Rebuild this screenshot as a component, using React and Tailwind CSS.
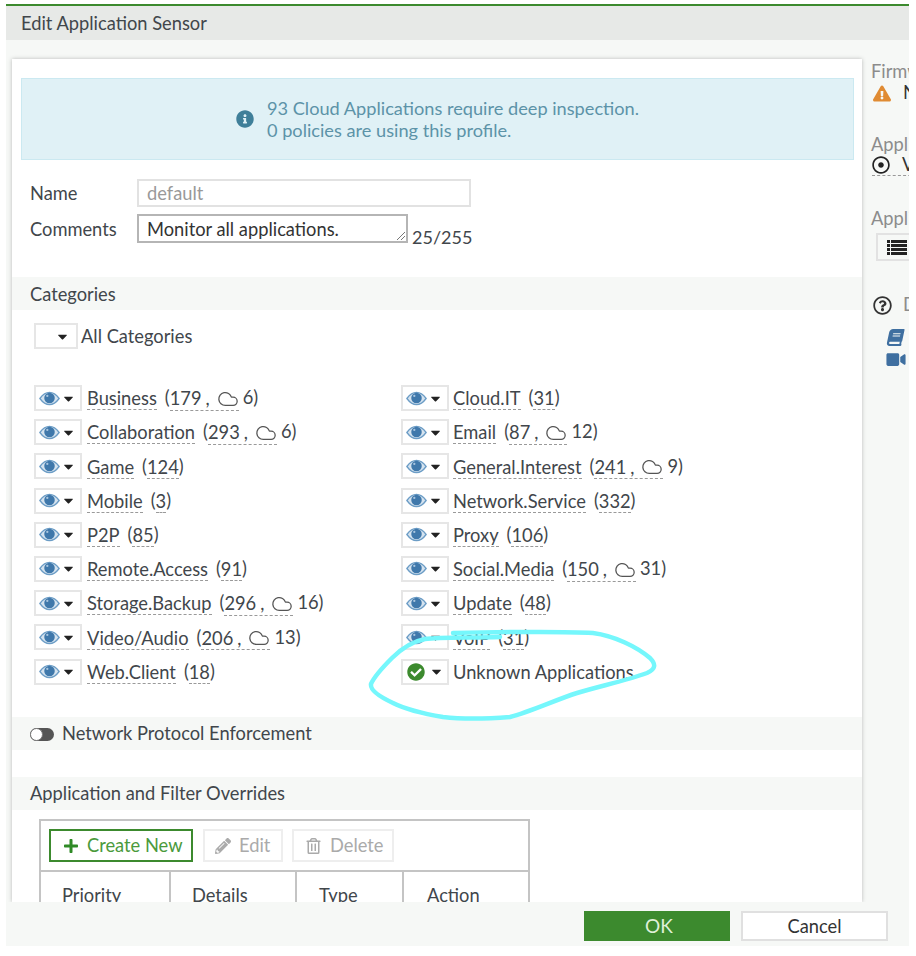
import { Cloud } from 'lucide-react';
import {
  FaBook,
  FaCaretDown,
  FaCheckCircle,
  FaExclamationTriangle,
  FaInfoCircle,
  FaPencilAlt,
  FaPlus,
  FaRegDotCircle,
  FaRegQuestionCircle,
  FaRegTrashAlt,
  FaVideo,
} from 'react-icons/fa';

const leftCategories = [
  { name: 'Business', count: 179, cloud: 6 },
  { name: 'Collaboration', count: 293, cloud: 6 },
  { name: 'Game', count: 124 },
  { name: 'Mobile', count: 3 },
  { name: 'P2P', count: 85 },
  { name: 'Remote.Access', count: 91 },
  { name: 'Storage.Backup', count: 296, cloud: 16 },
  { name: 'Video/Audio', count: 206, cloud: 13 },
  { name: 'Web.Client', count: 18 },
];

const rightCategories = [
  { name: 'Cloud.IT', count: 31 },
  { name: 'Email', count: 87, cloud: 12 },
  { name: 'General.Interest', count: 241, cloud: 9 },
  { name: 'Network.Service', count: 332 },
  { name: 'Proxy', count: 106 },
  { name: 'Social.Media', count: 150, cloud: 31 },
  { name: 'Update', count: 48 },
  { name: 'VoIP', count: 31 },
  { name: 'Unknown Applications', unknown: true },
];

const EyeIcon = () => (
  <svg className="shrink-0" width="21" height="15" viewBox="0 0 24 16">
    <path d="M1 8C5 2.5 9 1 12 1s7 1.500 11 7c-4 5.500-8 7-11 7S5 13.500 1 8z" fill="#d5e3ef" stroke="#6c9dc6" strokeWidth="1.500" />
    <circle cx="12" cy="7.500" r="6" fill="#3f78ab" />
    <circle cx="9.500" cy="5" r="1.300" fill="#a9c6df" />
  </svg>
);

const ListIcon = () => (
  <svg className="shrink-0" width="20" height="17" viewBox="0 0 20 17" fill="#222">
    <rect x="0" y="1" width="3" height="3" />
    <rect x="4" y="1" width="16" height="3" />
    <rect x="0" y="5" width="3" height="3" />
    <rect x="4" y="5" width="16" height="3" />
    <rect x="0" y="9" width="3" height="3" />
    <rect x="4" y="9" width="16" height="3" />
    <rect x="0" y="13" width="3" height="3" />
    <rect x="4" y="13" width="16" height="3" />
  </svg>
);

const CategoryRow = ({ category, right }) => {
  const { name, count, cloud, unknown } = category;

  return (
    <div className="flex items-center h-[26px] mb-[8.2px]">
      <div className="flex items-center w-[48px] h-[26px] border-2 border-[#e6e6e6] bg-white pl-[3px] shrink-0">
        {unknown ? (
          <FaCheckCircle className="w-[18px] h-[18px] ml-[1px] mr-[3px] text-[#3c8a2e]" />
        ) : (
          <EyeIcon />
        )}
        <FaCaretDown className="w-[15px] h-[15px] ml-[1px] text-[#222]" />
      </div>
      {unknown ? (
        <span className={`${right ? 'ml-[4px]' : 'ml-[5px]'} mt-[2px]`}>{name}</span>
      ) : (
        <>
          <span className={`${right ? 'ml-[4px]' : 'ml-[5px]'} border-b border-dashed border-[#9a9a9a] leading-[21px] mt-[2.5px]`}>{name}</span>
          <span className="ml-[8px]">(</span>
          <span className="flex items-center border-b border-dashed border-[#9a9a9a] leading-[21px] mt-[2.5px]">
            {count}
            {cloud !== undefined && (
              <>
                <span className="ml-[4px]">,</span>
                <Cloud className="w-[22px] h-[22px] ml-[7px] text-[#555]" strokeWidth={1.4} />
              </>
            )}
          </span>
          {cloud !== undefined && <span className="ml-[4px]">{cloud}</span>}
          <span>)</span>
        </>
      )}
    </div>
  );
};

const SectionBand = ({ children, className = '' }) => (
  <div className={`flex items-center h-[33px] bg-[#f6f8f6] pl-[18px] pt-[2px] ${className}`}>{children}</div>
);

const App = () => {
  return (
    <div
      className="relative w-[916px] h-[956px] bg-white overflow-hidden text-[18.3px] text-[#41464b]"
      style={{ fontFamily: 'Lato, "Open Sans", sans-serif' }}
    >
      <div className="flex flex-col w-[903px] h-[942px] mt-[4px] ml-[6px] bg-[#f6f8f6]">
        {/* Title bar */}
        <div className="flex items-center h-[36px] shrink-0 pl-[15px] pt-[2px] bg-[#e7e9e7] border-t-2 border-[#3c8a2e]">
          Edit Application Sensor
        </div>

        <div className="flex flex-1 min-h-0 pt-[19px]">
          {/* Main panel */}
          <div className="w-[850px] ml-[6px] shrink-0 bg-white shadow-[0_0_4px_rgba(0,0,0,0.25)] overflow-hidden">
            <div className="flex items-center justify-center h-[82px] mt-[19px] ml-[9px] mr-[8px] bg-[#e0f1f6] border border-[#cbe9f1] text-[18.2px] text-[#5c93a8] leading-[22px]">
              <FaInfoCircle className="w-[18px] h-[18px] mr-[13px] text-[#3f7f99]" />
              <div>
                <div>93 Cloud Applications require deep inspection.</div>
                <div>0 policies are using this profile.</div>
              </div>
            </div>

            <div className="flex items-center mt-[19px] ml-[18px] h-[28px]">
              <span className="w-[107px] pt-[2px]">Name</span>
              <div className="flex items-center w-[334px] h-[28px] border-2 border-[#e2e2e2] pl-[8px] pt-[2px] text-[#999]">default</div>
            </div>
            <div className="flex items-center mt-[7px] ml-[18px] h-[29px]">
              <span className="w-[107px] pt-[2px]">Comments</span>
              <div className="relative flex items-center w-[271px] h-[29px] border-2 border-[#b5b5b5] pl-[8px] pt-[2px] text-[#333]">
                Monitor all applications.
                <svg className="absolute right-0 bottom-0" width="10" height="10" viewBox="0 0 10 10">
                  <path d="M1 9 9 1M5 9 9 5" stroke="#777" strokeWidth="1" />
                </svg>
              </div>
              <span className="ml-[4px] mt-[18px] text-[18px]">25/255</span>
            </div>

            <SectionBand className="mt-[34px]">Categories</SectionBand>

            <div className="flex items-center mt-[13px] ml-[22px] h-[26px]">
              <div className="flex items-center justify-end w-[44px] h-[26px] border-2 border-[#e6e6e6] pr-[6px]">
                <FaCaretDown className="w-[15px] h-[15px] text-[#222]" />
              </div>
              <span className="ml-[3px] pt-[2px]">All Categories</span>
            </div>

            <div className="grid grid-cols-[367px_1fr] mt-[36px] ml-[22px]">
              <div>
                {leftCategories.map((category) => (
                  <CategoryRow key={category.name} category={category} />
                ))}
              </div>
              <div>
                {rightCategories.map((category) => (
                  <CategoryRow key={category.name} category={category} right />
                ))}
              </div>
            </div>

            <SectionBand className="mt-[24px]">
              <div className="relative w-[24px] h-[13px] rounded-full bg-[#555] mr-[8px]">
                <div className="absolute left-0 top-0 w-[13px] h-[13px] rounded-full bg-white border border-[#777]" />
              </div>
              Network Protocol Enforcement
            </SectionBand>

            <SectionBand className="mt-[27px]">Application and Filter Overrides</SectionBand>

            <div className="mt-[9px] ml-[27px] w-[491px] border-2 border-b-0 border-[#c4c4c4]">
              <div className="flex items-center h-[51px] pl-[8px] border-b-2 border-[#c4c4c4]">
                <div className="flex items-center w-[144px] h-[33px] border-2 border-[#3c8a2e] text-[#4a9a3c] pl-[12px] pt-[2px]">
                  <FaPlus className="w-[16px] h-[16px] mr-[8px] text-[#2f8a26]" />
                  Create New
                </div>
                <div className="flex items-center w-[80px] h-[33px] ml-[10px] border-2 border-[#eeeeee] text-[#aaa] pl-[10px] pt-[2px]">
                  <FaPencilAlt className="w-[16px] h-[16px] mr-[8px]" />
                  Edit
                </div>
                <div className="flex items-center w-[102px] h-[33px] ml-[9px] border-2 border-[#eeeeee] text-[#aaa] pl-[12px] pt-[2px]">
                  <FaRegTrashAlt className="w-[15px] h-[16px] mr-[9px]" />
                  Delete
                </div>
              </div>
              <div className="grid grid-cols-[130px_126px_107px_1fr] h-[60px]">
                <div className="pl-[21px] pt-[10px] border-r-2 border-[#c4c4c4]">Priority</div>
                <div className="pl-[21px] pt-[10px] border-r-2 border-[#c4c4c4]">Details</div>
                <div className="pl-[22px] pt-[10px] border-r-2 border-[#c4c4c4]">Type</div>
                <div className="pl-[23px] pt-[10px]">Action</div>
              </div>
            </div>
          </div>

          {/* Right sidebar, cut off by the window */}
          <div className="flex-1 min-w-0 overflow-hidden whitespace-nowrap pl-[10px] text-[#333]">
            <div className="mt-[1px] -ml-[1px] text-[#8c8c8c] leading-[22px]">Firmware</div>
            <div className="flex items-center h-[22px] ml-[1px]">
              <FaExclamationTriangle className="w-[18px] h-[17px] text-[#e08b33] shrink-0" />
              <span className="ml-[12px]">No</span>
            </div>
            <div className="mt-[29px] -ml-[1px] text-[#8c8c8c] leading-[22px]">Application</div>
            <div className="flex items-center h-[21px] border-b border-dashed border-[#999] w-[60px]">
              <FaRegDotCircle className="w-[18px] h-[18px] text-[#222] shrink-0" />
              <span className="ml-[12px]">View</span>
            </div>
            <div className="mt-[31px] -ml-[1px] text-[#8c8c8c] leading-[22px]">Application</div>
            <div className="flex items-center w-[60px] h-[28px] ml-[4px] mt-[4px] border-2 border-[#e2e2e2] pl-[9px]">
              <ListIcon />
            </div>
            <div className="flex items-center mt-[33px] h-[22px] ml-[1px]">
              <FaRegQuestionCircle className="w-[19px] h-[19px] text-[#333] shrink-0" />
              <span className="ml-[11px] text-[#8c8c8c]">Documentation</span>
            </div>
            <div className="mt-[13px] ml-[14px] text-[#3f6fa0]">
              <FaBook className="w-[17px] h-[17px] -skew-x-12 ml-[1px]" />
              <FaVideo className="w-[20px] h-[17px] mt-[5px]" />
            </div>
          </div>
        </div>

        {/* Footer */}
        <div className="flex items-center justify-end h-[44px] shrink-0 pr-[21px] pt-[3px] bg-[#f6f8f6]">
          <div className="flex items-center justify-center w-[146px] h-[30px] pt-[2px] pl-[4px] bg-[#3c8a2e] text-[19px] text-[#dff0d8]">OK</div>
          <div className="flex items-center justify-center w-[147px] h-[30px] ml-[11px] pt-[2px] bg-white border-2 border-[#e0e0e0] text-[#333]">Cancel</div>
        </div>
      </div>

      {/* Hand-drawn highlight on top of the screenshot */}
      <svg className="absolute left-0 top-0 pointer-events-none" width="916" height="956" viewBox="0 0 916 956" fill="none">
        <path
          d="M453 633C500 632 560 631 593 633C615 636 637 647 650 658C656 664 656 669 647 673C625 681 600 686 577 693C555 700 530 712 510 717C485 719 460 719 443 717C425 714 405 709 393 703C380 697 370 690 371 684C374 677 382 668 392 658C400 650 410 642 425 639C440 637 470 638 500 637"
          stroke="#75f7fc"
          strokeWidth="4.5"
          strokeLinecap="round"
        />
      </svg>
    </div>
  );
};

export default App;
